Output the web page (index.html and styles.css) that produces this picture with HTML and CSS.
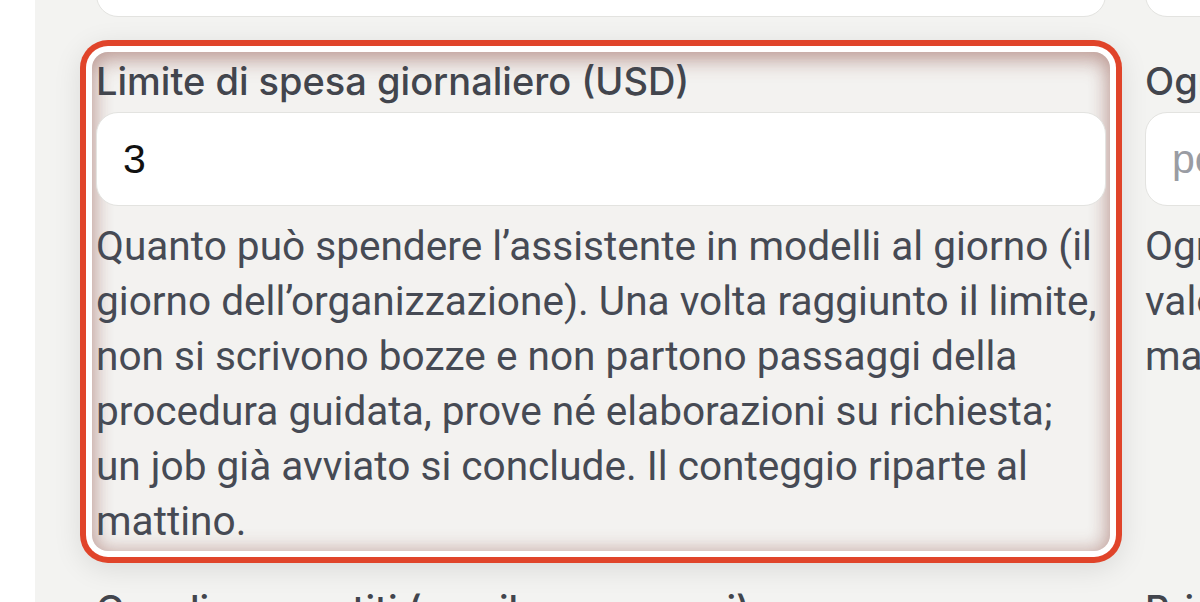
FILE: index.html
```html
<!DOCTYPE html>
<html lang="it">
<head>
<meta charset="utf-8">
<title>Impostazioni assistente</title>
<link rel="stylesheet" href="styles.css">
</head>
<body>
<div class="app">
  <aside class="sidebar"></aside>
  <main class="main">
    <div class="grid">
      <div class="field field-prev">
        <input class="input" type="text" value="">
      </div>
      <div class="field field-prev">
        <input class="input" type="text" value="">
      </div>

      <div class="field highlight">
        <label class="label">Limite di spesa giornaliero (USD)</label>
        <input class="input" type="text" value="3">
        <p class="help">Quanto può spendere l’assistente in modelli al giorno (il giorno dell’organizzazione). Una volta raggiunto il limite, non si scrivono bozze e non partono passaggi della procedura guidata, prove né elaborazioni su richiesta; un job già avviato si conclude. Il conteggio riparte al mattino.</p>
      </div>
      <div class="field">
        <label class="label">Ogni quanto ricontrollare (ore)</label>
        <input class="input" type="text" placeholder="per esempio 6">
        <p class="help">Ogni quante ore l’assistente ricontrolla le bozze e i<br>valori in sospeso. Lascia vuoto per usare il limite<br>massimo dell’organizzazione.</p>
      </div>

      <div class="field">
        <label class="label">Canali consentiti (email e messaggi)</label>
      </div>
      <div class="field">
        <label class="label">Priorità</label>
      </div>
    </div>
  </main>
</div>
</body>
</html>
```
FILE: styles.css
```css
html, body {
  margin: 0;
  padding: 0;
  height: 100%;
  overflow: hidden;
}
body {
  background: #ffffff;
  font-family: Inter, "Noto Sans", sans-serif;
}
.app {
  display: flex;
  height: 100%;
}
.sidebar {
  width: 35px;
  flex: 0 0 35px;
  background: #ffffff;
}
.main {
  flex: 1 1 auto;
  background: #f3f3f1;
  padding-left: 57px;
  overflow: hidden;
}
.grid {
  display: grid;
  grid-template-columns: 1018px 1018px;
  column-gap: 31px;
  row-gap: 29px;
  margin-top: -77px;
}
.field {
  display: flex;
  flex-direction: column;
  padding: 0 4px;
  border-radius: 16px;
}
.field-prev {
  padding-bottom: 6px;
}
.label {
  display: block;
  font-family: Inter, "Noto Sans", sans-serif;
  font-weight: 500;
  font-size: 38px;
  line-height: 48px;
  color: #42454d;
  margin-top: 5px;
  margin-bottom: 7px;
  white-space: nowrap;
}
.input {
  box-sizing: border-box;
  height: 94px;
  width: 100%;
  border: 1px solid #e3e3e0;
  border-radius: 22px;
  background: #ffffff;
  padding: 0 26px;
  font-family: "Liberation Sans", Arial, sans-serif;
  font-size: 41px;
  color: #111111;
  outline: none;
}
.input::placeholder {
  color: #9a9ca3;
}
.help {
  margin: 13px 0 2px 0;
  padding-right: 6px;
  font-family: Roboto, "Noto Sans", sans-serif;
  font-size: 40.6px;
  line-height: 55px;
  color: #464a54;
  white-space: normal;
}
.highlight {
  background: #f3f2f0;
  box-shadow:
    inset 0 10px 20px rgba(130, 60, 50, 0.28),
    inset 0 0 18px 3px rgba(140, 70, 60, 0.30),
    0 0 0 6px #ffffff,
    0 0 0 12px #e0442a,
    0 6px 28px 12px rgba(0, 0, 0, 0.10);
}
```
